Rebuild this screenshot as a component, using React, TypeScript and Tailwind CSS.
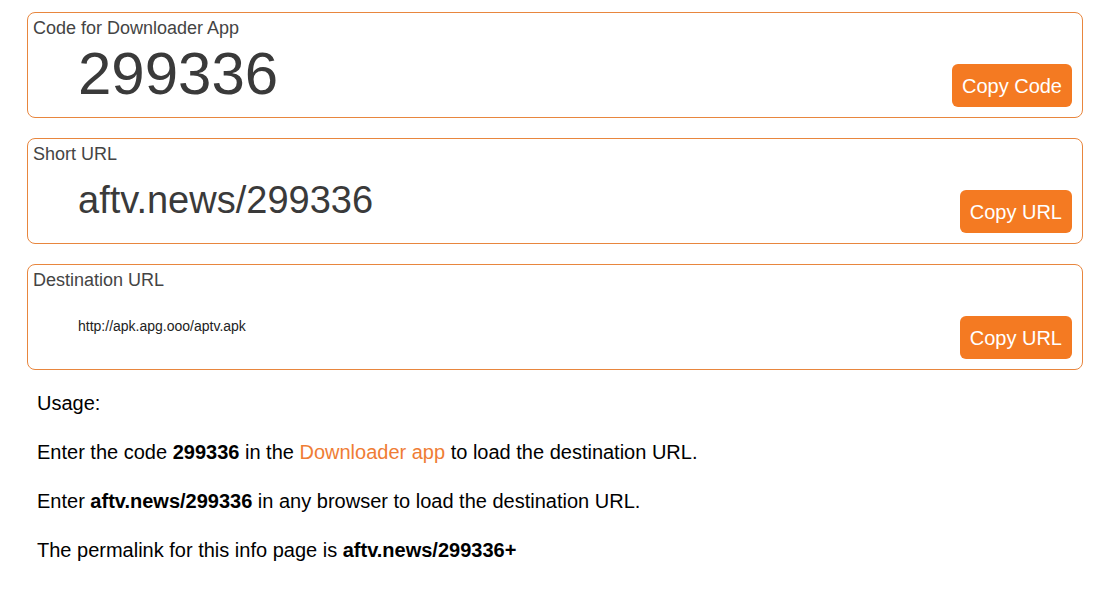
const FONT = { fontFamily: '"Liberation Sans", Arial, sans-serif' };

function InfoBox({
  label,
  value,
  valueClass,
  button,
}: {
  label: string;
  value: string;
  valueClass: string;
  button: string;
}) {
  return (
    <div className="flex h-[106px] flex-col rounded-[8px] border border-[#e8863e] bg-white px-[5px] pt-[4px]">
      <div className="text-[18px] leading-[22px] text-[#444444]">{label}</div>
      <div className="flex flex-1 items-end justify-between pb-[10px] pr-[5px]">
        <div className={`mt-[2px] self-center pl-[45px] text-[#3a3a3a] ${valueClass}`}>{value}</div>
        <button className="h-[43px] rounded-[6px] bg-[#f47a22] px-[10px] text-[20px] text-white">
          {button}
        </button>
      </div>
    </div>
  );
}

export default function App() {
  return (
    <div className="min-h-screen bg-white" style={FONT}>
      <div className="ml-[27px] w-[1056px] pt-[12px]">
        <div className="flex flex-col gap-[20px]">
          <InfoBox
            label="Code for Downloader App"
            value="299336"
            valueClass="text-[60px] leading-[60px]"
            button="Copy Code"
          />
          <InfoBox
            label="Short URL"
            value="aftv.news/299336"
            valueClass="text-[38px] leading-[38px]"
            button="Copy URL"
          />
          <InfoBox
            label="Destination URL"
            value="http://apk.apg.ooo/aptv.apk"
            valueClass="text-[14px] leading-[16px] text-[#222222]"
            button="Copy URL"
          />
        </div>

        <div className="mt-[18px] flex flex-col gap-[19px] pl-[10px] text-[20px] leading-[30px] text-black">
          <p>Usage:</p>
          <p>
            Enter the code <b>299336</b> in the{' '}
            <a className="text-[#ef7d35]">Downloader app</a> to load the destination URL.
          </p>
          <p>
            Enter <b>aftv.news/299336</b> in any browser to load the destination URL.
          </p>
          <p>
            The permalink for this info page is <b>aftv.news/299336+</b>
          </p>
        </div>
      </div>
    </div>
  );
}
